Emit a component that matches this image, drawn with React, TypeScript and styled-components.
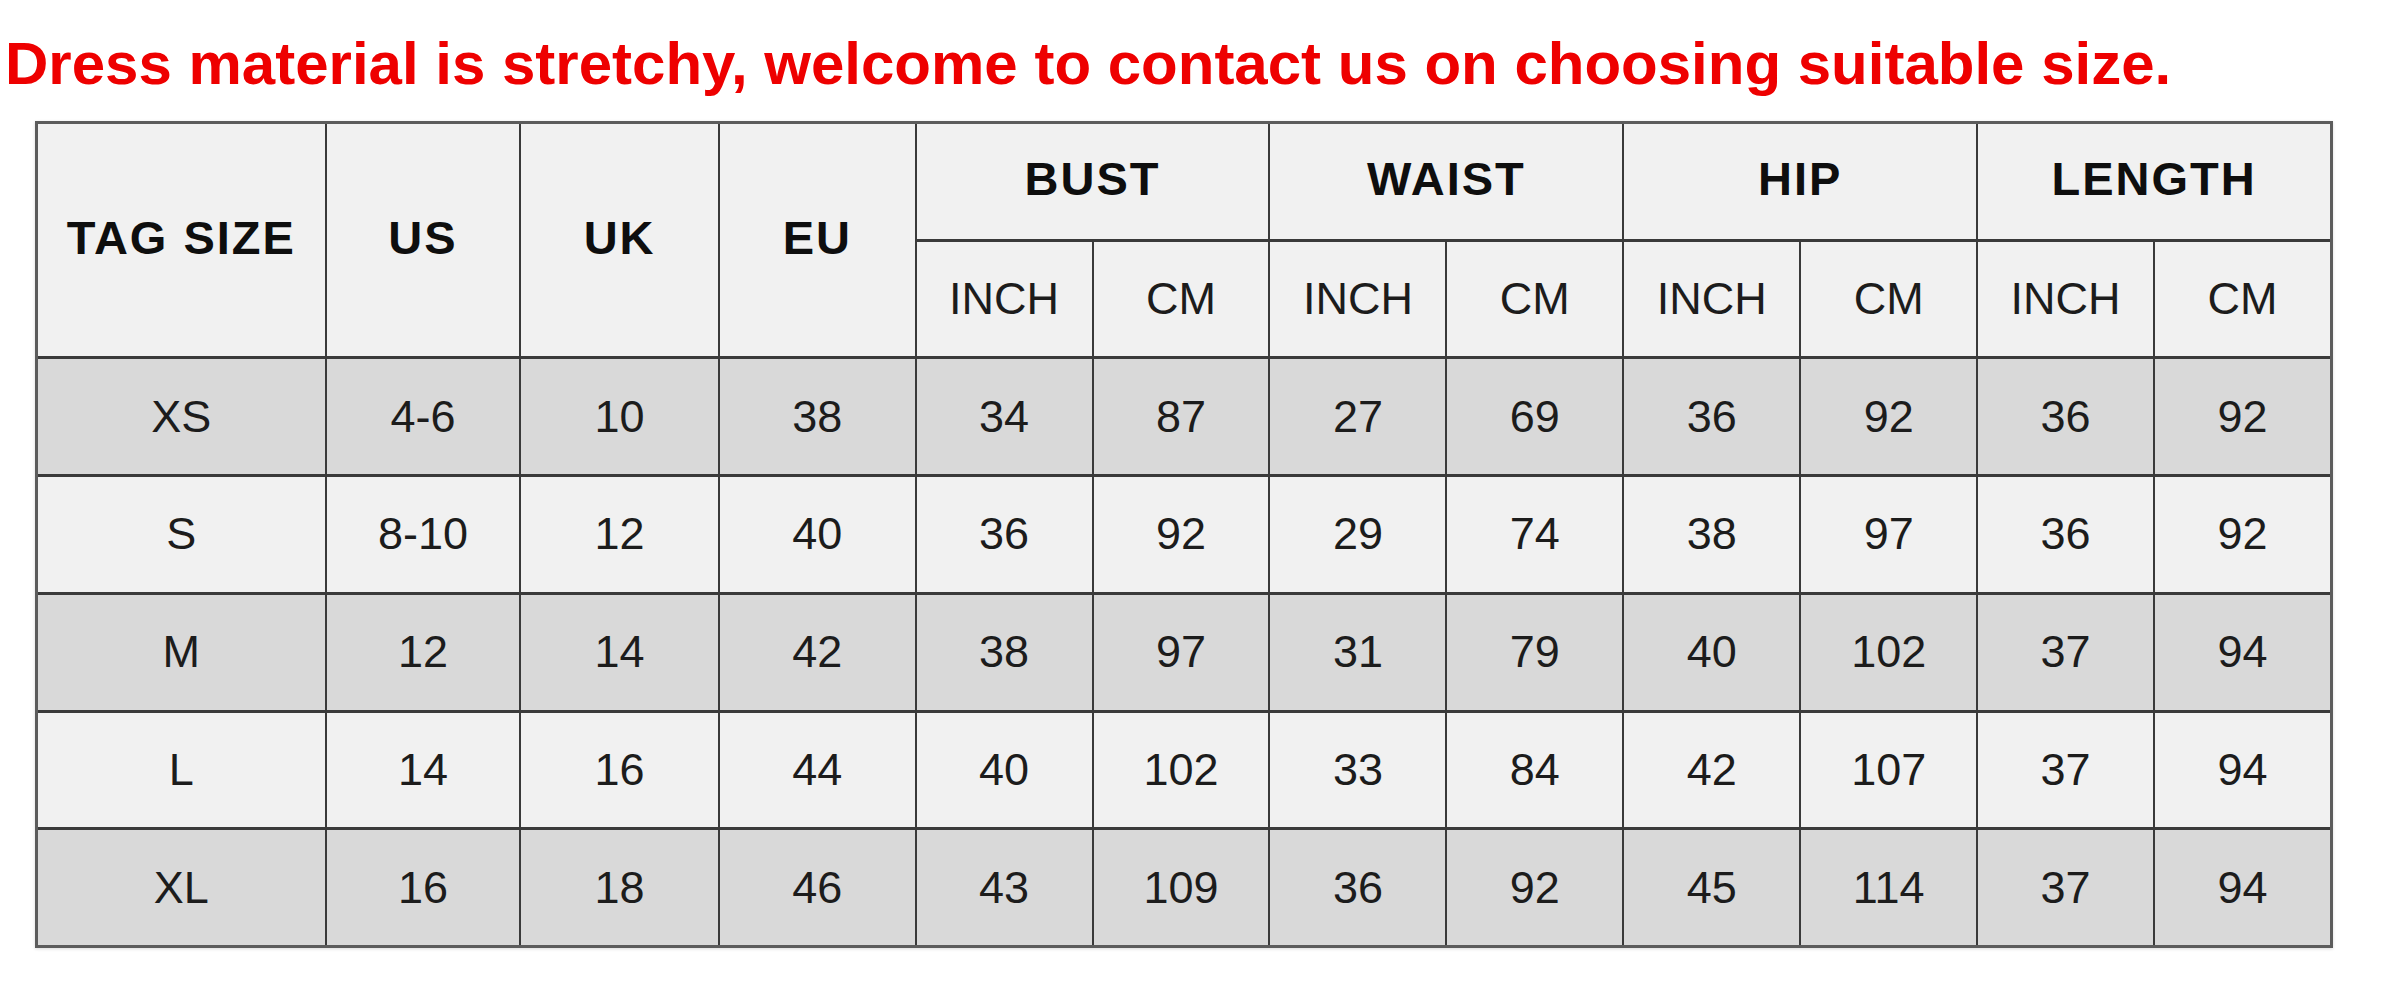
import React from "react";
import styled, { createGlobalStyle } from "styled-components";

const Global = createGlobalStyle`
  html, body {
    margin: 0;
    padding: 0;
    background: #ffffff;
  }
  body {
    font-family: "Liberation Sans", Arial, sans-serif;
  }
`;

const Page = styled.div`
  display: flex;
  flex-direction: column;
  align-items: flex-start;
  padding-top: 34px;
  width: 2397px;
  height: 997px;
  box-sizing: border-box;
  background: #ffffff;
`;

const Title = styled.h1`
  margin: 0;
  padding-left: 5px;
  font-family: "Liberation Sans", Arial, sans-serif;
  font-weight: 700;
  font-size: 60px;
  line-height: 60px;
  color: #ee0000;
  white-space: nowrap;
`;

const Grid = styled.div`
  margin: 27px 0 0 35px;
  width: 2298px;
  height: 827px;
  box-sizing: border-box;
  display: grid;
  grid-template-columns: 290fr 195fr 199fr 197fr repeat(8, 177fr);
  grid-template-rows: repeat(7, 1fr);
  column-gap: 2px;
  row-gap: 3px;
  background: #3a3a3a;
  border: 3px solid #5c5c5c;
  box-shadow: 0 1px 3px rgba(0, 0, 0, 0.15);
`;

const Cell = styled.div<{ $dark?: boolean; $head?: boolean }>`
  display: flex;
  align-items: center;
  justify-content: center;
  background: ${(p) => (p.$dark ? "#d9d9d9" : "#f1f1f1")};
  color: ${(p) => (p.$head ? "#0e0e0e" : "#1c1c1c")};
  font-family: "Liberation Sans", Arial, sans-serif;
  font-weight: ${(p) => (p.$head ? 700 : 400)};
  font-size: ${(p) => (p.$head ? "47px" : "45px")};
  letter-spacing: ${(p) => (p.$head ? "2px" : "0")};
  padding-bottom: ${(p) => (p.$head ? "5px" : "0")};
  white-space: nowrap;
`;

const TallHead = styled(Cell)`
  grid-row: span 2;
`;

const GroupHead = styled(Cell)`
  grid-column: span 2;
`;

const groups = ["BUST", "WAIST", "HIP", "LENGTH"];

const rows: string[][] = [
  ["XS", "4-6", "10", "38", "34", "87", "27", "69", "36", "92", "36", "92"],
  ["S", "8-10", "12", "40", "36", "92", "29", "74", "38", "97", "36", "92"],
  ["M", "12", "14", "42", "38", "97", "31", "79", "40", "102", "37", "94"],
  ["L", "14", "16", "44", "40", "102", "33", "84", "42", "107", "37", "94"],
  ["XL", "16", "18", "46", "43", "109", "36", "92", "45", "114", "37", "94"],
];

export default function App() {
  return (
    <>
      <Global />
      <Page>
        <Title>Dress material is stretchy, welcome to contact us on choosing suitable size.</Title>
        <Grid>
          <TallHead $head>TAG SIZE</TallHead>
          <TallHead $head>US</TallHead>
          <TallHead $head>UK</TallHead>
          <TallHead $head>EU</TallHead>
          {groups.map((g) => (
            <GroupHead key={g} $head>
              {g}
            </GroupHead>
          ))}
          {groups.map((g) => (
            <React.Fragment key={g + "-u"}>
              <Cell>INCH</Cell>
              <Cell>CM</Cell>
            </React.Fragment>
          ))}
          {rows.map((r, i) =>
            r.map((v, j) => (
              <Cell key={i + "-" + j} $dark={i % 2 === 0}>
                {v}
              </Cell>
            ))
          )}
        </Grid>
      </Page>
    </>
  );
}
